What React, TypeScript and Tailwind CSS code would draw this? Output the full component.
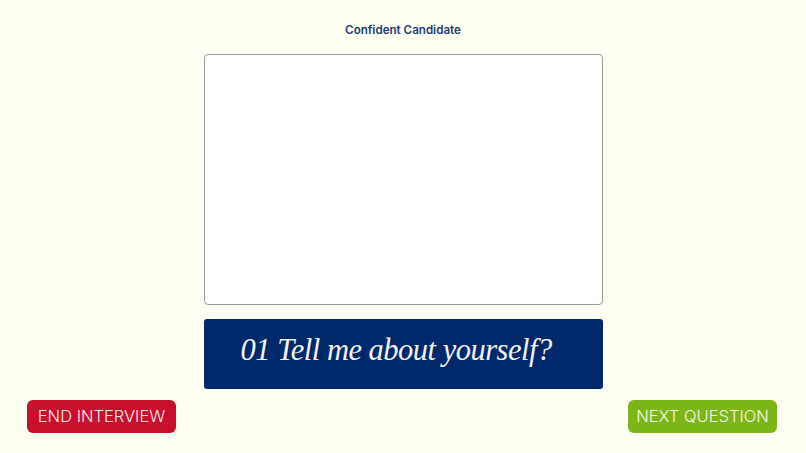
export default function App() {
  return (
    <div className="w-full h-[453px] bg-[#fefef3] flex flex-col items-center font-['Inter',sans-serif]">
      <h1 className="mt-[22px] text-[11.6px] leading-[16px] font-semibold text-[#1d3a72]">Confident Candidate</h1>
      <div className="mt-[16px] w-[399px] h-[251px] bg-white border border-[#9a9a9a] rounded-[4px]" />
      <div className="mt-[14px] w-[399px] h-[70px] bg-[#00296b] rounded-[3px] flex items-center pl-[37px] pb-[6px]">
        <p className="font-['Liberation_Serif',serif] italic text-[30.5px] text-[#f4f4ee] tracking-[-0.5px]">
          01 Tell me about yourself?
        </p>
      </div>
      <div className="w-full mt-[11px] pl-[27px] pr-[29px] flex justify-between">
        <button className="w-[149px] h-[33px] bg-[#c8102e] rounded-[6px] text-[16.5px] font-light text-[#fbe9ea]">
          END INTERVIEW
        </button>
        <button className="w-[149px] h-[33px] bg-[#7cb518] rounded-[6px] text-[16.5px] font-light text-[#f4f9e8]">
          NEXT QUESTION
        </button>
      </div>
    </div>
  );
}
